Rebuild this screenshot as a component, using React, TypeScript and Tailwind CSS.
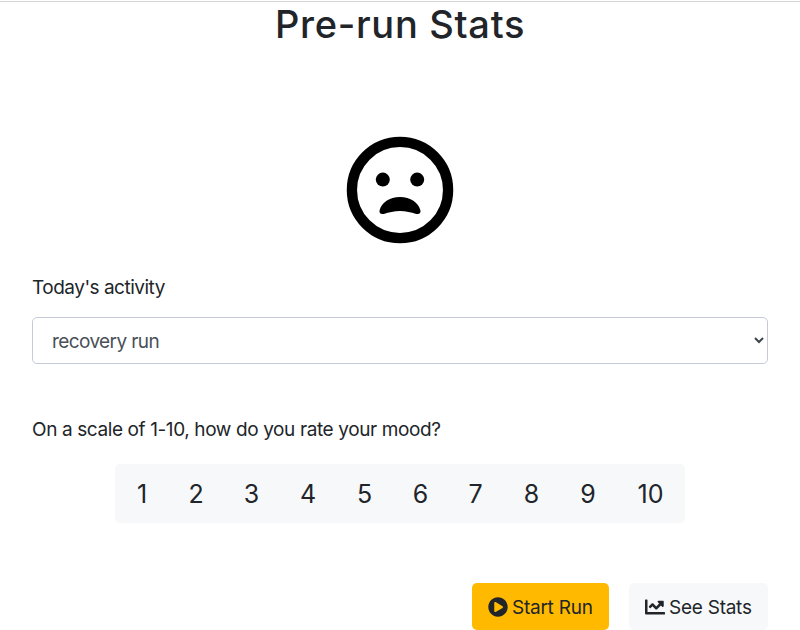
import React from "react";
import { FaPlayCircle, FaChartLine } from "react-icons/fa";

const ratings = [
  { n: 1, cell: "w-[54px]" },
  { n: 2, cell: "w-[54px]" },
  { n: 3, cell: "w-[57px]" },
  { n: 4, cell: "w-[56px]" },
  { n: 5, cell: "w-[57px]" },
  { n: 6, cell: "w-[55px]" },
  { n: 7, cell: "w-[55px]" },
  { n: 8, cell: "w-[57px]" },
  { n: 9, cell: "w-[56px]" },
  { n: 10, cell: "w-[69px]" },
];

function SadFace() {
  return (
    <svg className="h-[108px] w-[108px]" viewBox="0 0 108 108" fill="black" aria-hidden="true">
      <circle cx="54" cy="54" r="48.1" fill="none" stroke="black" strokeWidth="10.3" />
      <circle cx="36.8" cy="43.6" r="7" />
      <circle cx="71.2" cy="43.6" r="7" />
      <path d="M54 61C43.5 61 35.5 66.5 33.6 74.2C32.9 77 34.8 78.7 37.8 77.9C43 76.4 48 75 54 75C60 75 65 76.4 70.2 77.9C73.2 78.7 75.1 77 74.4 74.2C72.5 66.5 64.5 61 54 61Z" />
    </svg>
  );
}

export default function App() {
  return (
    <div className="h-[630px] w-[800px] overflow-hidden bg-white pt-px">
      <main className="flex h-[629px] flex-col border-t border-[#d3d5d7] px-8 font-['Inter',sans-serif] text-[19px] text-[#212529]">
        <h1 className="h-[48px] text-center text-[38px] leading-[45px] font-medium tracking-[0.7px]">Pre-run Stats</h1>
        <div className="mt-[86px] flex justify-center">
          <SadFace />
        </div>
        <label htmlFor="activity" className="mt-[29px] h-[29px] leading-[29px] tracking-[-0.5px]">Today's activity</label>
        <div className="relative mt-[15px] h-[47px]">
          <select id="activity" className="h-full w-full appearance-none rounded-[5px] border border-[#c6cad8] bg-white px-[19px] pt-[3px] text-[19px] tracking-[-0.6px] text-[#495057]">
            <option>recovery run</option>
          </select>
          <svg className="pointer-events-none absolute top-[20px] right-[4px] h-[7px] w-[10px]" viewBox="0 0 10 7" fill="none" stroke="#3d444b" strokeWidth="2">
            <path d="M1 1L5 5L9 1" />
          </svg>
        </div>
        <p className="mt-[51px] h-[29px] leading-[29px] tracking-[-0.39px]">On a scale of 1-10, how do you rate your mood?</p>
        <div className="mt-[20px] flex h-[59px] w-[570px] self-center rounded-[5px] bg-[#f7f8fa] pt-[2px] text-[25px]">
          {ratings.map((r) => (
            <button key={r.n} className={r.cell}>{r.n}</button>
          ))}
        </div>
        <div className="mt-[60px] flex justify-end gap-5">
          <button className="flex h-[47px] w-[137px] items-center gap-1 rounded-[5px] bg-[#ffba00] pl-4 whitespace-nowrap">
            <FaPlayCircle className="h-5 w-5 shrink-0" />
            <span className="pt-[3px] tracking-[-0.25px]">Start Run</span>
          </button>
          <button className="flex h-[47px] w-[139px] items-center gap-1 rounded-[5px] bg-[#f7f8fa] pl-4 whitespace-nowrap">
            <FaChartLine className="h-5 w-5 shrink-0" />
            <span className="pt-[3px] tracking-[-0.25px]">See Stats</span>
          </button>
        </div>
      </main>
    </div>
  );
}
